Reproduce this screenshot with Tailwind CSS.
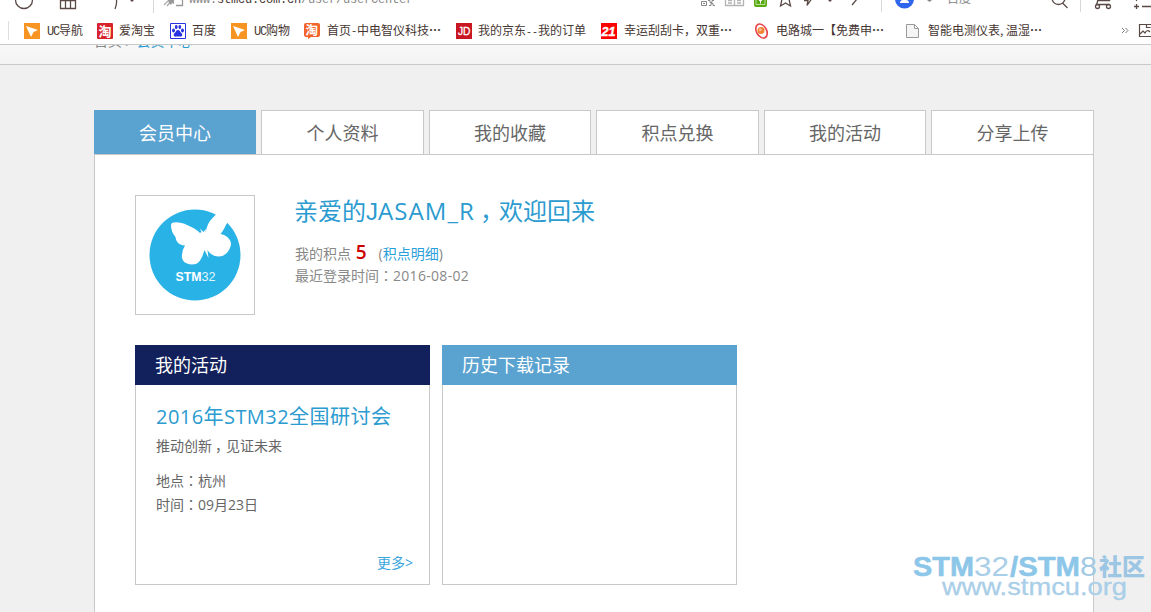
<!DOCTYPE html>
<html lang="zh-CN">
<head>
<meta charset="utf-8">
<title>会员中心</title>
<script src="https://cdn.jsdelivr.net/npm/@tailwindcss/browser@4"></script>
</head>
<body class="w-[1151px] h-[612px] overflow-hidden bg-[#f0f0f0] font-['Open_Sans','Noto_Sans_CJK_SC',sans-serif] text-[#666]">
<div class="relative w-[1151px] h-[612px] overflow-hidden">

<!-- Browser chrome -->
<header class="h-[45px] bg-white border-b border-[#c8c8c8] overflow-hidden">
  <div class="flex h-[14px] overflow-hidden">
    <svg class="shrink-0" width="189" height="14" fill="none" stroke="#5a4a46" stroke-width="1.3">
      <circle cx="24" cy="0" r="8.5"/>
      <path d="M60.5 -5V8.5H75.5V-5M65.5 0V8M70.5 0V8M60 .5H76M116.500 0Q117 4 115 9"/>
      <path d="M130 0h4l-2 2z" fill="#5a4a46" stroke="none"/>
      <path d="M153.500 0V13" stroke="#d8d8d8" stroke-width="1"/>
      <path d="M164 5l5-5M167 6l5-6" stroke="#aaa"/>
      <path d="M168 0h6v4l-2-1-1 2-2-2z" fill="#999" stroke="none"/>
      <path d="M176 5.500h6.500V0" stroke="#999"/>
    </svg>
    <div class="w-[512px] shrink-0 -mt-[8px] text-[12px] leading-[16px] tracking-[-0.2px] text-[#888] font-['Liberation_Mono',monospace] whitespace-nowrap">www.<span class="text-[#463632]">stmcu.com.cn</span>/user/userCenter</div>
    <svg class="shrink-0" width="246" height="14" viewBox="701 0 246 14" fill="none" stroke="#5a4a46" stroke-width="1.3">
      <g stroke="#888" stroke-width="1"><path d="M701.500 1.500h5v4h-5zM703 3.500h2M708 .5h2v2h2v-2h2M709 5.500h2v-2h2v2h2"/></g>
      <path d="M725.500 0V5.500H743.500V0M734.500 0V5M728 .5h4M737 .5h4M728 3h4M737 3h4" stroke="#b3b3b3"/>
      <path d="M754 0h13v5q0 2-2 2h-9q-2 0-2-2z" fill="#59a912" stroke="none"/>
      <path d="M756 0v4.500h9V0" stroke="#d6efbf" stroke-width=".8"/>
      <path d="M760.500 0v3.500M759 0l1.500 1.500 1.500-1.500" stroke="#fff" stroke-width="1"/>
      <path d="M782 -1l-1.500 7 5-3 5 3-1.500-7"/>
      <path d="M804 .5h4l-1 5 4.500-6.500" />
      <path d="M828 0h4l-2 2z" fill="#5a4a46" stroke="none"/>
      <path d="M852 5l5-6"/>
      <path d="M881.500 0V12" stroke="#d8d8d8" stroke-width="1"/>
      <circle cx="904.500" cy="-1" r="9.500" fill="#3066ee" stroke="none"/>
      <path d="M900 3Q900 0 903 0h3q3 0 3 3z" fill="#fff" stroke="none"/>
      <path d="M927 0h5l-2.500 2z" fill="#888" stroke="none"/>
    </svg>
    <div class="w-[100px] shrink-0 -mt-[10px] text-[12px] leading-[16px] text-[#888] font-['Noto_Sans_CJK_SC',sans-serif]">百度</div>
    <svg class="shrink-0" width="104" height="14" viewBox="1047 0 104 14" fill="none" stroke="#5a4a46" stroke-width="1.3">
      <circle cx="1058.500" cy="-2" r="6.500"/><path d="M1062.500 3l5 5"/>
      <path d="M1080.500 0V12" stroke="#d8d8d8" stroke-width="1"/>
      <path d="M1097 0.500h12.500L1111 -3M1098 0l-1.500 4.500h13"/>
      <circle cx="1097.500" cy="6.500" r="2"/><circle cx="1108.500" cy="6.500" r="2"/>
      <path d="M1134 6.500h5M1136.500 4v5M1142 6.500h9M1136.500 0v1"/>
    </svg>
  </div>

  <nav class="flex h-[31px] pt-[8px] leading-[16px] text-[12px] text-[#463632] whitespace-nowrap font-['Noto_Sans_CJK_SC',sans-serif]">
    <div class="w-[24px] shrink-0 -mt-[1px] h-[19px]"><div class="ml-[8px] w-px h-full bg-[#dedede]"></div></div>
    <a class="flex shrink-0 w-[73px] gap-[7px]"><svg class="mt-[1px]" width="16" height="16"><path fill="#f79423" d="M0 0h16v16H0z"/><path fill="#fff" d="M2 3l12 4-4.500 2L7 14z"/></svg><span><span class="inline-block w-[12px] font-['Liberation_Mono'] text-[12px] tracking-[-1.2px]">UC</span>导航</span></a>
    <a class="flex shrink-0 w-[73px] gap-[6px]"><svg class="mt-[1px]" width="16" height="16"><rect width="16" height="16" rx="1" fill="#d9232c"/><text x="1.500" y="12.500" font-size="13" font-weight="700" fill="#fff">淘</text></svg><span>爱淘宝</span></a>
    <a class="flex shrink-0 w-[61px] gap-[6px]"><svg class="mt-[1px]" width="16" height="16"><path fill="#fff" stroke="#2932e1" d="M.5.500h15v15H.5z"/><g fill="#2932e1"><ellipse cx="3.500" cy="7.500" rx="1.500" ry="1.900"/><ellipse cx="6.200" cy="4" rx="1.400" ry="1.900"/><ellipse cx="9.800" cy="4" rx="1.400" ry="1.900"/><ellipse cx="12.500" cy="7.500" rx="1.500" ry="1.900"/><path d="M8 7c2 0 2 2 3.500 3.200 1.600 1.500.6 3.800-1.500 3.400H6c-2.100.4-3.100-1.900-1.500-3.400C6 9 6 7 8 7z"/></g></svg><span>百度</span></a>
    <a class="flex shrink-0 w-[73px] gap-[7px]"><svg class="mt-[1px]" width="16" height="16"><path fill="#f79423" d="M0 0h16v16H0z"/><path fill="#fff" d="M2 3l12 4-4.500 2L7 14z"/></svg><span><span class="inline-block w-[12px] font-['Liberation_Mono'] text-[12px] tracking-[-1.2px]">UC</span>购物</span></a>
    <a class="flex shrink-0 w-[152px] gap-[7px]"><svg class="mt-[1px]" width="16" height="16"><path d="M2 0h12q2 0 2 2v10q0 2-2 2H7l-3 2v-2H2q-2 0-2-2V2q0-2 2-2z" fill="#f2642b"/><text x="1.500" y="11.500" font-size="12.500" font-weight="700" fill="#fff">淘</text></svg><span>首页<span class="inline-block w-[6px] text-center">-</span>中电智仪科技<span class="inline-block w-[12px] text-center font-bold">⋯</span></span></a>
    <a class="flex shrink-0 w-[145px] gap-[6px]"><svg class="mt-[1px]" width="16" height="16"><path fill="#c91623" d="M0 0h16v16H0z"/><text x="2" y="12" font-size="11" textLength="12.500" lengthAdjust="spacingAndGlyphs" font-family="Liberation Sans" fill="#fff" stroke="#fff" stroke-width=".3">JD</text></svg><span>我的京东<span class="inline-block w-[12px] text-center font-['Liberation_Mono'] text-[10px]">--</span>我的订单</span></a>
    <a class="flex shrink-0 w-[152px] gap-[7px]"><svg class="mt-[1px]" width="16" height="16"><path fill="#f00" d="M0 0h16v16H0z"/><text x=".5" y="12.500" font-size="13" textLength="14" lengthAdjust="spacingAndGlyphs" font-family="Liberation Sans" font-style="italic" font-weight="700" fill="#fff" stroke="#fff" stroke-width=".4">21</text></svg><span>幸运刮刮卡，双重<span class="inline-block w-[12px] text-center font-bold">⋯</span></span></a>
    <a class="flex shrink-0 w-[154px] gap-[8px]"><svg class="mt-[1px]" width="16" height="16" fill="none"><ellipse cx="8.500" cy="8" rx="5" ry="7.500" transform="rotate(-30 8.500 8)" stroke="#e8434a" stroke-width="1.600"/><circle cx="8" cy="7.500" r="3.500" fill="#f38538"/><circle cx="7.300" cy="6.800" r="1.300" fill="#fbd0a0"/></svg><span class="-ml-[1px]">电路城一【免费申<span class="inline-block w-[12px] text-center font-bold">⋯</span></span></a>
    <a class="flex shrink-0 w-[216px] -ml-[2px] gap-[7px]"><svg class="mt-[1px]" width="16" height="16"><path d="M1.500 1.500h8l4 4v9h-12zM9.500 1.500v4h4" fill="#f5f5f5" stroke="#999"/></svg><span>智能电测仪表<span class="inline-block w-[6px]">,</span>温湿<span class="inline-block w-[12px] text-center font-bold">⋯</span></span></a>
    <svg class="shrink-0 -ml-[2px]" width="32" height="18" viewBox="1119 22 32 18" fill="none" stroke="#5a4a46"><path d="M1122 28l2.500 2.500-2.500 2.500M1125.500 28l2.500 2.500-2.500 2.500" stroke="#777"/><path d="M1151 24.500H1139.500V36.500H1151M1140 34l3-3 2 2q2-4 5-1M1146.500 25v2.500h4" stroke-width="1.200"/></svg>
  </nav>
</header>

<!-- Breadcrumb, scrolled partly under the toolbar -->
<div class="h-[20px] overflow-hidden bg-gradient-to-b from-[#f8f8f8] to-[#f3f3f3] border-b border-[#c8c8c8]">
  <div class="pl-[94px] -mt-[14px] text-[14px] leading-[20px] whitespace-nowrap text-[#888]">首页 <span class="mr-[2px]">/</span> <span class="text-[#2b9bd0]">会员中心</span></div>
</div>

<main class="ml-[94px] mt-[45px] w-[1000px]">
  <nav class="grid grid-cols-[162px_163px_162px_163px_162px_163px] gap-[5px] h-[44px] text-[18px] leading-[44px] text-center *:h-[44px] *:overflow-hidden">
    <a class="bg-[#5aa2d0] text-white leading-[46px]">会员中心</a>
    <a class="bg-white border border-b-0 border-[#c8c8c8]">个人资料</a>
    <a class="bg-white border border-b-0 border-[#c8c8c8]">我的收藏</a>
    <a class="bg-white border border-b-0 border-[#c8c8c8]">积点兑换</a>
    <a class="bg-white border border-b-0 border-[#c8c8c8]">我的活动</a>
    <a class="bg-white border border-b-0 border-[#c8c8c8]">分享上传</a>
  </nav>
  <div class="h-[470px] bg-white border border-[#c8c8c8] px-[40px] pt-[40px]">
    <section class="flex h-[150px]">
      <div class="w-[120px] h-[120px] shrink-0 border border-[#c8c8c8]">
        <svg width="118" height="118" viewBox="136 196 118 118">
          <circle cx="195" cy="255" r="45.500" fill="#29b2e6"/>
          <path fill="#fff" d="M171 225C171 221 181 222 187 225Q195 228 200 233L201.500 232L200 228.500L203.500 232L206 229L205.500 233Q207 223 213 217.500Q217 214 222 206L234 217Q226 223 225 227Q223 231 220.500 234C226 235 231 239 231 244C230 252 224 257 218 256.500Q211 256 207.500 250L208.500 258L204.500 250L202.500 256C200 261 198 264.500 192 264.500C185 264.500 181 260 182 255Q182 250 185 245.500C178 245 176 241 175.500 237Q171 232 171 225Z"/>
          <text x="175.500" y="280.500" font-family="Liberation Sans" font-size="13.500" font-weight="700" fill="#fff" textLength="26" lengthAdjust="spacingAndGlyphs">STM</text>
          <text x="201.500" y="280.500" font-family="Liberation Sans" font-size="13.500" fill="#e4f7ff" textLength="14" lengthAdjust="spacingAndGlyphs">32</text>
        </svg>
      </div>
      <div class="ml-[39px] whitespace-nowrap text-[14px] leading-[22px] text-[#888]">
        <h1 class="h-[46px] text-[24px] leading-[32px] text-[#2b9bd0]">亲爱的<span class="inline-block w-[109px]"><span class="font-['Liberation_Sans']">J</span><span class="tracking-[1.1px]">ASAM_R</span></span><span class="inline-block w-[24px] pl-[5px] leading-none">，</span>欢迎回来</h1>
        <p class="h-[22px] ml-px">我的积点 <b class="text-[19px] ml-px font-semibold text-[#c00]">5</b><span class="ml-[12px]">(<span class="text-[#2b9fd9]">积点明细</span>)</span></p>
        <p class="ml-px mt-px">最近登录时间<span lang="zh-TW" class="font-['Noto_Sans_CJK_TC']">：</span><span class="tracking-[0.3px]">2016-08-02</span></p>
      </div>
    </section>
    <section class="flex gap-[12px]">
      <article class="w-[295px] h-[240px] border border-[#c8c8c8] text-[14px] leading-[24px] whitespace-nowrap">
        <h2 class="-mt-px -mx-px h-[40px] bg-[#12215b] pl-[20px] text-[18px] leading-[41px] text-white">我的活动</h2>
        <div class="px-[20px] pt-[16px]">
          <h3 class="h-[32px] text-[20px] leading-[32px] text-[#2b9bd0] tracking-[0.45px]">2016年STM32全国研讨会</h3>
          <p class="h-[24px] mt-px">推动创新<span class="inline-block w-[14px] pl-[3px] leading-none">，</span>见证未来</p>
          <p class="h-[24px] mt-[10px]">地点<span lang="zh-TW" class="font-['Noto_Sans_CJK_TC']">：</span>杭州</p>
          <p class="h-[24px]">时间<span lang="zh-TW" class="font-['Noto_Sans_CJK_TC']">：</span>09月23日</p>
          <p class="mt-[35px] -mr-[4px] text-right text-[#3aa5dc]">更多&gt;</p>
        </div>
      </article>
      <article class="w-[295px] h-[240px] border border-[#c8c8c8]">
        <h2 class="-mt-px -mx-px h-[40px] bg-[#5aa2d0] pl-[20px] text-[18px] leading-[41px] text-white">历史下载记录</h2>
      </article>
    </section>
  </div>
</main>

<!-- Watermark -->
<svg class="absolute left-[905px] top-[545px]" width="246" height="67" viewBox="905 545 246 67" font-family="Liberation Sans">
  <g font-size="28">
    <text x="913" y="576" font-weight="700" fill="#8cc6e8" stroke="#8cc6e8" stroke-width=".5" textLength="61" lengthAdjust="spacingAndGlyphs">STM</text>
    <text x="974" y="576" fill="#a9cee8" textLength="35" lengthAdjust="spacingAndGlyphs">32</text>
    <text x="1010" y="576" font-weight="700" fill="#8cc6e8" stroke="#8cc6e8" stroke-width=".5" textLength="70" lengthAdjust="spacingAndGlyphs">/STM</text>
    <text x="1080" y="576" fill="#a3cae5" textLength="17" lengthAdjust="spacingAndGlyphs">8</text>
  </g>
  <text x="1099" y="575" font-family="Noto Sans CJK SC" font-size="23" font-weight="900" fill="#9cc6e3" textLength="46" lengthAdjust="spacingAndGlyphs">社区</text>
  <text x="942" y="595" font-size="23" fill="#a9cee8" stroke="#a9cee8" stroke-width=".3" textLength="185" lengthAdjust="spacingAndGlyphs">www.stmcu.org</text>
</svg>
</div>
</body>
</html>
